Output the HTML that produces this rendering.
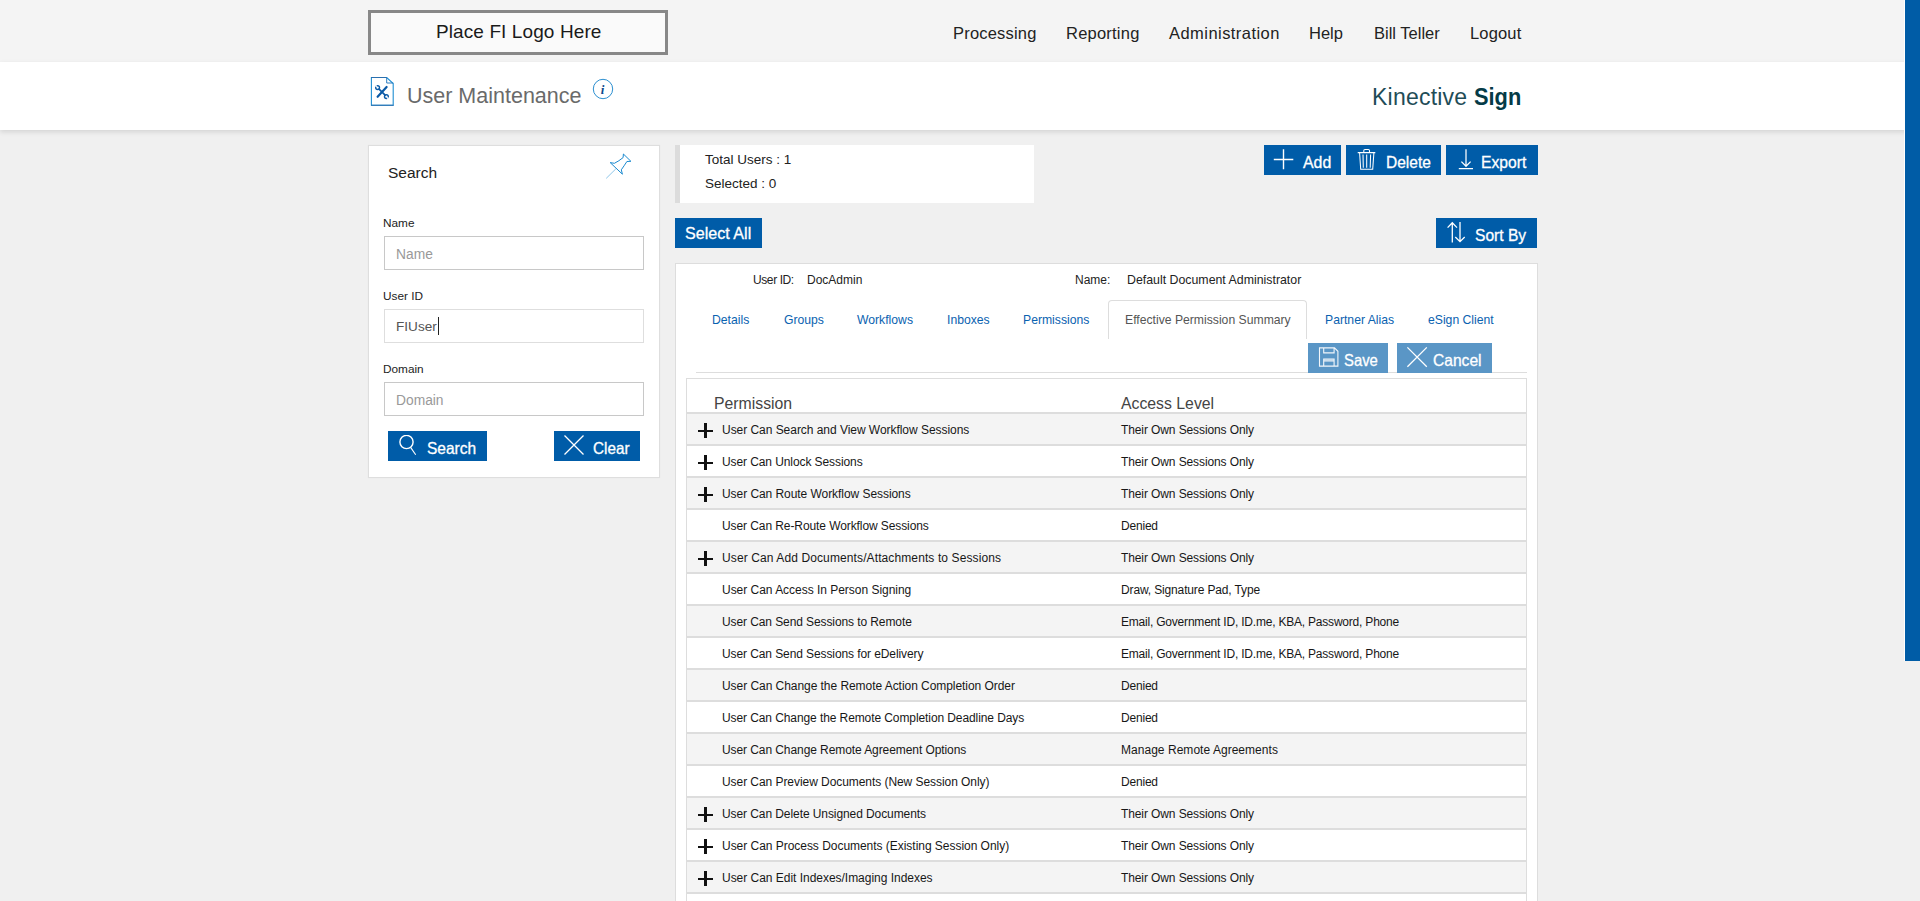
<!DOCTYPE html>
<html><head><meta charset="utf-8">
<style>
*{box-sizing:border-box;margin:0;padding:0}
html,body{width:1920px;height:901px;overflow:hidden}
body{background:#f0f0f0;font-family:"Liberation Sans",sans-serif;position:relative;color:#222}
.a{position:absolute;white-space:nowrap}
#top{position:absolute;left:0;top:0;width:1920px;height:62px;background:#f4f4f4}
#logo{position:absolute;left:368px;top:10px;width:300px;height:45px;border:3px solid #888;background:#fafafa}
#logo span{position:absolute;left:65px;top:8px;font-size:19px;color:#1a1a1a;letter-spacing:0.1px}
.nav{position:absolute;top:24px;font-size:16.5px;color:#222;line-height:18px}
#hdr{position:absolute;left:0;top:62px;width:1920px;height:68px;background:#fff;box-shadow:0 2px 5px rgba(0,0,0,0.12)}
#title{position:absolute;left:407px;top:84px;font-size:21.5px;color:#6a6a6a;line-height:24px}
#brand{position:absolute;left:1372px;top:84px;font-size:23px;color:#053b47;line-height:26px}
#brand b{font-weight:bold}
#panel{position:absolute;left:368px;top:145px;width:292px;height:333px;background:#fff;border:1px solid #dedede;box-shadow:0 0 1px rgba(0,0,0,0.06)}
.lbl{position:absolute;left:383px;font-size:11.8px;color:#222;line-height:14px}
.inp{position:absolute;left:384px;width:260px;height:34px;border:1px solid #c8c8c8;background:#fff}
.ph{position:absolute;left:396px;font-size:13.8px;color:#999;line-height:15px}
.btn{position:absolute;background:#005ca8;color:#fff;font-weight:normal;-webkit-text-stroke:0.3px #fff;font-size:16px;line-height:18px}
.btn span{position:absolute;white-space:nowrap;font-size:16.5px;transform-origin:0 0}
#stats{position:absolute;left:675px;top:145px;width:359px;height:58px;background:#fff;border-left:5px solid #dcdcdc}
.st{position:absolute;left:705px;font-size:13.5px;color:#222;line-height:16px}
#card{position:absolute;left:675px;top:263px;width:863px;height:700px;background:#fff;border:1px solid #ddd}
.tab{position:absolute;top:313px;font-size:12.2px;color:#0a62b0;line-height:14px}
#tabact{position:absolute;left:1108px;top:300px;width:199px;height:39px;border:1px solid #ddd;border-bottom:none;border-radius:4px 4px 0 0;background:#fff}
#tbl{position:absolute;left:686px;top:378px;width:841px;height:600px;border:1px solid #ddd;border-bottom:none;background:#fff}
.row{position:absolute;left:687px;width:839px;height:32px;border-bottom:2px solid #ddd}
.row.g{background:#f4f4f4}
.row .p{position:absolute;left:35px;top:9px;font-size:12px;color:#171717;line-height:14px}
.row .v{position:absolute;left:434px;top:9px;font-size:12px;color:#171717;line-height:14px}
.plus{position:absolute;left:11px;top:9px;width:15px;height:15px}
.plus:before{content:"";position:absolute;left:6px;top:0;width:3px;height:15px;background:#111}
.plus:after{content:"";position:absolute;left:0;top:6.5px;width:15px;height:2.5px;background:#111}
#sb{position:absolute;left:1904px;top:0;width:16px;height:661px;background:#005ca6;border-left:1px solid #fff}
</style></head>
<body>
<div id="top"></div>
<div id="logo"><span>Place FI Logo Here</span></div>
<div class="nav" style="left:953px;letter-spacing:0.2px">Processing</div>
<div class="nav" style="left:1066px;letter-spacing:0.22px">Reporting</div>
<div class="nav" style="left:1169px;letter-spacing:0.45px">Administration</div>
<div class="nav" style="left:1309px">Help</div>
<div class="nav" style="left:1374px">Bill Teller</div>
<div class="nav" style="left:1470px;letter-spacing:0.15px">Logout</div>

<div id="hdr"></div>
<svg class="a" style="left:370px;top:76px" width="26" height="31" viewBox="0 0 26 31">
 <path d="M1.4 1.5 H16.7 L23.2 7.5 V29.2 H1.4 Z" fill="#fff" stroke="#1f8ed2" stroke-width="1.1"/>
 <path d="M1 1.5 H16.7 M1 29.2 H23.6" stroke="#2a6fae" stroke-width="1.1"/>
 <path d="M16.7 1.5 V7 H23.2" fill="none" stroke="#2a7cc0" stroke-width="1"/>
 <path d="M16.6 11 L7.6 20.8" stroke="#0b5aa6" stroke-width="2.2" stroke-linecap="round"/>
 <path d="M8.6 12.6 L15.6 19.6" stroke="#0b5aa6" stroke-width="1.6"/>
 <circle cx="7.6" cy="11.6" r="1.9" fill="none" stroke="#0b5aa6" stroke-width="1.4"/>
 <circle cx="16.4" cy="20.6" r="1.9" fill="none" stroke="#0b5aa6" stroke-width="1.4"/>
 <path d="M5.5 9.5 L6.8 10.8 M18.5 22.7 L17.2 21.4" stroke="#fff" stroke-width="1.6"/>
</svg>
<div id="title">User Maintenance</div>
<svg class="a" style="left:592px;top:78px" width="22" height="22" viewBox="0 0 22 22">
 <circle cx="11" cy="11" r="9.7" fill="none" stroke="#2c8fd0" stroke-width="1"/>
 <text x="10.5" y="16" font-family="Liberation Serif" font-style="italic" font-weight="bold" font-size="13" fill="#0d4a8c" text-anchor="middle">i</text>
</svg>
<div id="brand"><span style="letter-spacing:0.22px;color:#1f4d57">Kinective</span> <b style="display:inline-block;transform:scaleX(0.947);transform-origin:0 0">Sign</b></div>

<!-- search panel -->
<div id="panel"></div>
<div class="a" style="left:388px;top:164px;font-size:15.5px;color:#222;line-height:18px">Search</div>
<svg class="a" style="left:600px;top:148px" width="40" height="40" viewBox="0 0 40 40">
 <path d="M15.8 20.9 L6.2 30.4" stroke="#7fbfe6" stroke-width="0.9"/>
 <path d="M10.2 14.6 L14.4 15.3 Q19 13 23.1 9.6 L23.4 6 L30.9 13.3 L26.9 13.5 Q24 18 21.3 21.8 L22.4 26.2 Z" fill="none" stroke="#1a8ad0" stroke-width="1" stroke-linejoin="miter"/>
</svg>
<div class="lbl" style="top:216px">Name</div>
<div class="inp" style="top:236px"></div>
<div class="ph" style="top:247px">Name</div>
<div class="lbl" style="top:289px">User ID</div>
<div class="inp" style="top:309px;border-color:#dedede"></div>
<div class="ph" style="top:319px;color:#555;font-size:13.6px">FIUser</div>
<div class="a" style="left:438px;top:317px;width:1px;height:18px;background:#222"></div>
<div class="lbl" style="top:362px">Domain</div>
<div class="inp" style="top:382px"></div>
<div class="ph" style="top:393px">Domain</div>

<div class="btn" style="left:388px;top:431px;width:99px;height:30px">
 <svg class="a" style="left:10px;top:4px" width="20" height="22" viewBox="0 0 20 22"><circle cx="8.5" cy="7" r="6.6" fill="none" stroke="#fff" stroke-width="1.4"/><path d="M12.6 12.4 L17.7 19.8" stroke="#fff" stroke-width="1.1"/></svg>
 <span style="left:39px;top:8px;transform:scaleX(0.94)">Search</span></div>
<div class="btn" style="left:554px;top:431px;width:86px;height:30px">
 <svg class="a" style="left:9px;top:3px" width="22" height="22" viewBox="0 0 22 22"><path d="M1.5 1.5 L20.5 20.5 M20.5 1.5 L1.5 20.5" stroke="#fff" stroke-width="1.3"/></svg>
 <span style="left:39px;top:8px;transform:scaleX(0.925)">Clear</span></div>

<!-- stats -->
<div id="stats"></div>
<div class="st" style="top:152px">Total Users : 1</div>
<div class="st" style="top:176px">Selected : 0</div>

<div class="btn" style="left:1264px;top:145px;width:77px;height:30px">
 <svg class="a" style="left:9px;top:4px" width="22" height="22" viewBox="0 0 22 22"><path d="M10.5 0.2 V20.3 M0.8 10.5 H20.3" stroke="#fff" stroke-width="1.4"/></svg>
 <span style="left:39px;top:8px;transform:scaleX(0.965)">Add</span></div>
<div class="btn" style="left:1346px;top:145px;width:95px;height:30px">
 <svg class="a" style="left:11px;top:3px" width="20" height="24" viewBox="0 0 20 24"><path d="M0.7 4.6 H18.3 M6.8 4.4 V2.6 Q6.8 1.5 8 1.5 H11.3 Q12.5 1.5 12.5 2.6 V4.4 M2.6 4.8 L3.7 21.2 H15.7 L16.9 4.8 M6 6.5 L6.3 19.8 M9.7 6.5 V19.8 M13.6 6.5 L13.2 19.8" fill="none" stroke="#fff" stroke-width="1.05"/></svg>
 <span style="left:40px;top:8px;transform:scaleX(0.94)">Delete</span></div>
<div class="btn" style="left:1446px;top:145px;width:92px;height:30px">
 <svg class="a" style="left:12px;top:3px" width="16" height="24" viewBox="0 0 16 24"><path d="M8 1.2 V18.3 M3.4 13.6 L8 18.3 L12.6 13.6 M0.8 20.6 H15" fill="none" stroke="#fff" stroke-width="1.25"/></svg>
 <span style="left:35px;top:8px;transform:scaleX(0.95)">Export</span></div>

<div class="btn" style="left:675px;top:218px;width:87px;height:30px"><span style="left:10px;top:6px;transform:scaleX(0.976)">Select All</span></div>
<div class="btn" style="left:1436px;top:218px;width:101px;height:30px">
 <svg class="a" style="left:11px;top:3px" width="20" height="24" viewBox="0 0 20 24"><path d="M5.3 21.5 V1.8 M0.6 6.6 L5.3 1.8 L10 6.6 M13 1 V20.6 M8.3 16 L13 20.6 L17.7 16" fill="none" stroke="#fff" stroke-width="1.3"/></svg>
 <span style="left:39px;top:8px;transform:scaleX(0.945)">Sort By</span></div>

<!-- card -->
<div id="card"></div>
<div class="a" style="left:753px;top:273px;font-size:12px;color:#222;line-height:14px;letter-spacing:-0.4px">User ID:</div>
<div class="a" style="left:807px;top:273px;font-size:12px;color:#222;line-height:14px">DocAdmin</div>
<div class="a" style="left:1075px;top:273px;font-size:12px;color:#222;line-height:14px">Name:</div>
<div class="a" style="left:1127px;top:273px;font-size:12.35px;color:#222;line-height:14px">Default Document Administrator</div>

<div class="tab" style="left:712px">Details</div>
<div class="tab" style="left:784px">Groups</div>
<div class="tab" style="left:857px">Workflows</div>
<div class="tab" style="left:947px">Inboxes</div>
<div class="tab" style="left:1023px">Permissions</div>
<div id="tabact"></div>
<div class="tab" style="left:1125px;color:#555">Effective Permission Summary</div>
<div class="tab" style="left:1325px">Partner Alias</div>
<div class="tab" style="left:1428px">eSign Client</div>

<div class="a" style="left:696px;top:372px;width:831px;height:1px;background:#ddd"></div>
<div class="btn" style="left:1308px;top:343px;width:80px;height:30px;background:#5a96c6">
 <svg class="a" style="left:9px;top:3px" width="22" height="22" viewBox="0 0 22 22"><path d="M2.5 1.9 H17.5 L20.9 5.3 V20.1 H2.5 Z M6.7 1.9 V6.9 H17.1 V1.9 M6.7 20.1 V13.1 H17.1 V20.1 M6.7 14.9 H17.1" fill="none" stroke="#f2f6fa" stroke-width="1.1"/></svg>
 <span style="left:36px;top:8px;transform:scaleX(0.9)">Save</span></div>
<div class="btn" style="left:1397px;top:343px;width:95px;height:30px;background:#5a96c6">
 <svg class="a" style="left:9px;top:3px" width="22" height="22" viewBox="0 0 22 22"><path d="M1.4 1.4 L20.8 20.8 M20.8 1.4 L1.4 20.8" stroke="#fff" stroke-width="1.3"/></svg>
 <span style="left:36px;top:8px;transform:scaleX(0.945)">Cancel</span></div>

<div id="tbl"></div>
<div class="a" style="left:714px;top:395px;font-size:15.8px;color:#444;line-height:18px">Permission</div>
<div class="a" style="left:1121px;top:395px;font-size:15.8px;color:#444;line-height:18px">Access Level</div>
<div class="a" style="left:687px;top:412px;width:839px;height:2px;background:#ddd"></div>

<div class="row g" style="top:414px"><i class="plus"></i><span class="p" style="letter-spacing:-0.041px">User Can Search and View Workflow Sessions</span><span class="v" style="letter-spacing:-0.105px">Their Own Sessions Only</span></div>
<div class="row" style="top:446px"><i class="plus"></i><span class="p" style="letter-spacing:-0.091px">User Can Unlock Sessions</span><span class="v" style="letter-spacing:-0.105px">Their Own Sessions Only</span></div>
<div class="row g" style="top:478px"><i class="plus"></i><span class="p" style="letter-spacing:-0.058px">User Can Route Workflow Sessions</span><span class="v" style="letter-spacing:-0.105px">Their Own Sessions Only</span></div>
<div class="row" style="top:510px"><span class="p" style="letter-spacing:-0.088px">User Can Re-Route Workflow Sessions</span><span class="v" style="letter-spacing:-0.200px">Denied</span></div>
<div class="row g" style="top:542px"><i class="plus"></i><span class="p" style="letter-spacing:0.109px">User Can Add Documents/Attachments to Sessions</span><span class="v" style="letter-spacing:-0.105px">Their Own Sessions Only</span></div>
<div class="row" style="top:574px"><span class="p" style="letter-spacing:-0.025px">User Can Access In Person Signing</span><span class="v" style="letter-spacing:-0.142px">Draw, Signature Pad, Type</span></div>
<div class="row g" style="top:606px"><span class="p" style="letter-spacing:-0.094px">User Can Send Sessions to Remote</span><span class="v" style="letter-spacing:-0.206px">Email, Government ID, ID.me, KBA, Password, Phone</span></div>
<div class="row" style="top:638px"><span class="p" style="letter-spacing:-0.094px">User Can Send Sessions for eDelivery</span><span class="v" style="letter-spacing:-0.206px">Email, Government ID, ID.me, KBA, Password, Phone</span></div>
<div class="row g" style="top:670px"><span class="p" style="letter-spacing:-0.051px">User Can Change the Remote Action Completion Order</span><span class="v" style="letter-spacing:-0.200px">Denied</span></div>
<div class="row" style="top:702px"><span class="p" style="letter-spacing:-0.092px">User Can Change the Remote Completion Deadline Days</span><span class="v" style="letter-spacing:-0.200px">Denied</span></div>
<div class="row g" style="top:734px"><span class="p" style="letter-spacing:-0.082px">User Can Change Remote Agreement Options</span><span class="v" style="letter-spacing:0.035px">Manage Remote Agreements</span></div>
<div class="row" style="top:766px"><span class="p" style="letter-spacing:-0.059px">User Can Preview Documents (New Session Only)</span><span class="v" style="letter-spacing:-0.200px">Denied</span></div>
<div class="row g" style="top:798px"><i class="plus"></i><span class="p" style="letter-spacing:-0.082px">User Can Delete Unsigned Documents</span><span class="v" style="letter-spacing:-0.105px">Their Own Sessions Only</span></div>
<div class="row" style="top:830px"><i class="plus"></i><span class="p" style="letter-spacing:-0.033px">User Can Process Documents (Existing Session Only)</span><span class="v" style="letter-spacing:-0.105px">Their Own Sessions Only</span></div>
<div class="row g" style="top:862px"><i class="plus"></i><span class="p" style="letter-spacing:-0.025px">User Can Edit Indexes/Imaging Indexes</span><span class="v" style="letter-spacing:-0.105px">Their Own Sessions Only</span></div>
<div class="row" style="top:894px"></div>

<div id="sb"></div>
</body></html>
